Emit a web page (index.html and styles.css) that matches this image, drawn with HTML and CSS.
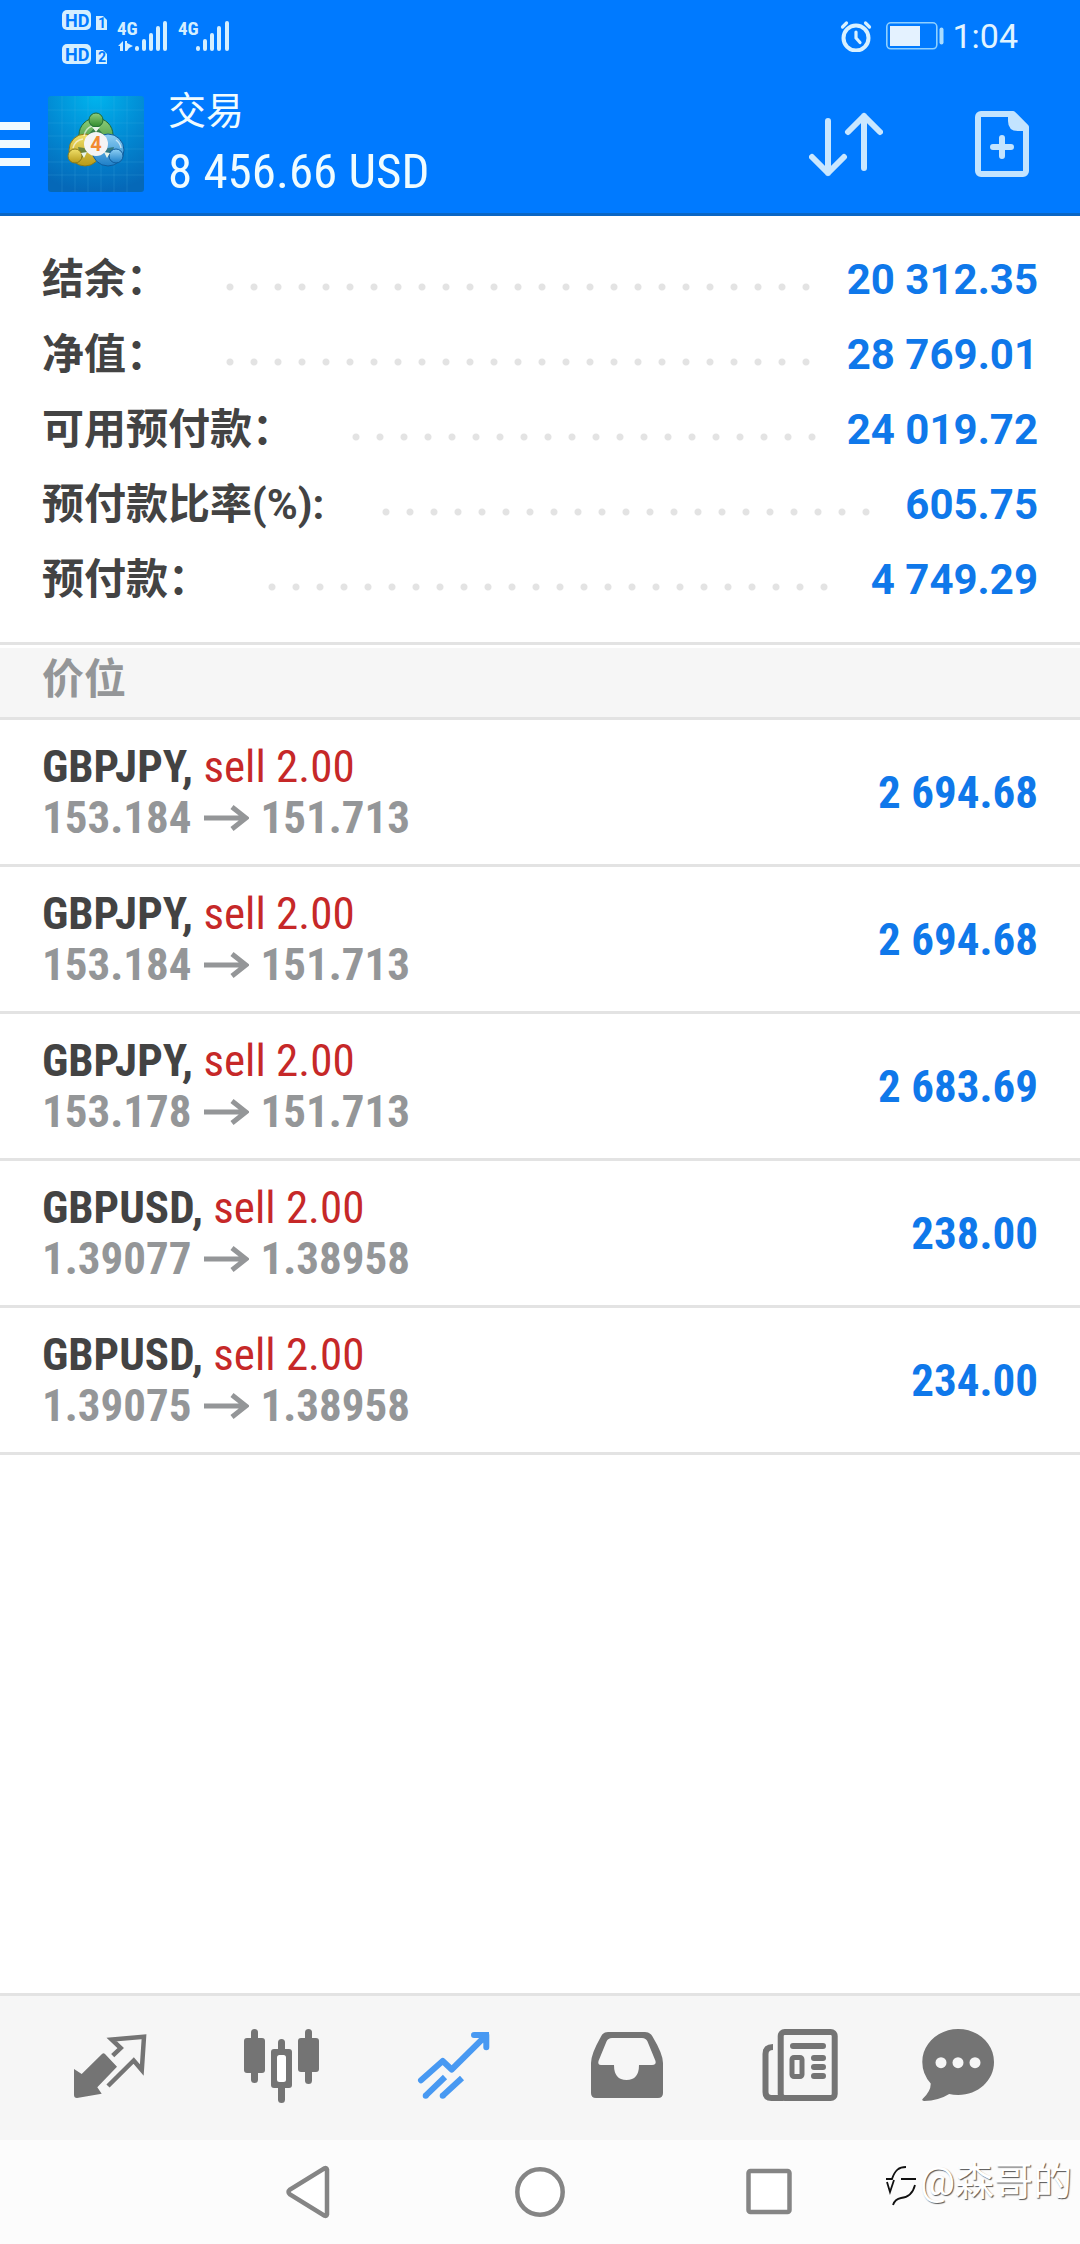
FILE: index.html
```html
<!DOCTYPE html>
<html lang="zh-CN">
<head>
<meta charset="utf-8">
<meta name="viewport" content="width=device-width, initial-scale=1">
<title>交易</title>
<link rel="stylesheet" href="styles.css">
</head>
<body>
<div class="app">
  <header class="top">
    <div class="status">
      <svg class="status-left" width="170" height="72" viewBox="0 0 170 72" aria-hidden="true">
        <g fill="#d4efff">
          <rect x="0" y="10" width="29" height="20" rx="5"/>
          <rect x="0" y="44" width="29" height="20" rx="5"/>
          <path d="M34 16h7l4 4v10h-11z"/>
          <path d="M34 50h7l4 4v10h-11z"/>
          <text class="net" x="55" y="35">4G</text>
          <text class="net" x="116" y="35">4G</text>
          <path d="M56 46l5-5v10h-3v-5zM63 41h2v2l6 3-4 2-2 3h-2z"/>
        </g>
        <g fill="#007aff">
          <text class="hd" x="3" y="27">HD</text>
          <text class="hd" x="3" y="61">HD</text>
          <text class="sim" x="36" y="28">1</text>
          <text class="sim" x="36" y="62">2</text>
        </g>
        <g stroke="#d4efff" stroke-width="4" stroke-linecap="round">
          <path d="M75 48v1M82 41v8M89 35v14M96 28v21M103 23v26"/>
          <path d="M136 48v1M143 41v8M150 35v14M157 28v21M165 23v26"/>
        </g>
      </svg>
      <div class="status-right">
        <svg width="32" height="32" viewBox="0 0 32 32" fill="none" stroke="#d9f1ff" stroke-width="4" stroke-linecap="round" aria-hidden="true">
          <circle cx="16" cy="18" r="12.5"/>
          <path d="M16 12v6l4 4.500M2.500 7l4-4M29.500 7l-4-4" stroke-width="3.200"/>
        </svg>
        <svg width="58" height="28" viewBox="0 0 58 28" aria-hidden="true">
          <rect x="0.800" y="0.800" width="50" height="26" rx="4" fill="none" stroke="#8fd0ff" stroke-width="1.600"/>
          <rect x="4" y="4" width="30" height="20" fill="#e4f2ff"/>
          <rect x="53.500" y="5.500" width="4" height="17" rx="2" fill="#a9dcff"/>
        </svg>
        <span class="clock">1:04</span>
      </div>
    </div>
    <div class="bar">
      <button class="icon-btn" type="button" aria-label="菜单">
        <svg width="30" height="44" viewBox="0 0 30 44"><path d="M0 0h30v8H0zM0 18h30v8H0zM0 36h30v8H0z" fill="#f0faff"/></svg>
      </button>
      <svg class="logo" width="96" height="96" viewBox="0 0 96 96" aria-hidden="true">
        <defs>
          <radialGradient id="bg" cx="50%" cy="0%" r="100%">
            <stop offset="0" stop-color="#00b4ee"/><stop offset="0.550" stop-color="#0288d2"/><stop offset="1" stop-color="#0568b8"/>
          </radialGradient>
          <linearGradient id="gr" x1="0" y1="0" x2="0" y2="1"><stop offset="0" stop-color="#8fce7c"/><stop offset="1" stop-color="#2f8a2c"/></linearGradient>
          <linearGradient id="ye" x1="0" y1="0" x2="0" y2="1"><stop offset="0" stop-color="#f0e06a"/><stop offset="1" stop-color="#b89a18"/></linearGradient>
          <linearGradient id="bl" x1="0" y1="0" x2="0" y2="1"><stop offset="0" stop-color="#8fd0f4"/><stop offset="1" stop-color="#1d7fc8"/></linearGradient>
        </defs>
        <rect width="96" height="96" rx="3" fill="url(#bg)"/>
        <path d="M14 0v96M27 0v96M40 0v96M53 0v96M66 0v96M79 0v96M0 14h96M0 27h96M0 40h96M0 53h96M0 66h96M0 79h96" stroke="#5cc4f0" stroke-opacity="0.180"/>
        <circle cx="48" cy="39" r="17" fill="url(#gr)" stroke="#1f6a38"/>
        <circle cx="37" cy="54" r="16" fill="url(#ye)" stroke="#8a7a18"/>
        <circle cx="60" cy="54" r="16" fill="url(#bl)" stroke="#0f5c9c"/>
        <path d="M36 40a13 13 0 0 1 8-10M25 52a12 12 0 0 1 10-9M68 44a12 12 0 0 1 5 8" fill="none" stroke="#ffffff" stroke-opacity="0.600" stroke-width="1.500"/>
        <path d="M39 40l9-10 9 10zM33 63l-3-12 12 2zM63 63l3-12-12 2z" fill="#12543a" fill-opacity="0.550"/>
        <circle cx="48" cy="24" r="7" fill="url(#gr)" stroke="#1f6a38"/>
        <circle cx="27" cy="60" r="7" fill="url(#ye)" stroke="#8a7a18"/>
        <circle cx="68" cy="60" r="7" fill="url(#bl)" stroke="#0f5c9c"/>
        <path d="M44 31l4 5 4-5zM33 57l6-1-3 6zM62 57l-6-1 3 6z" fill="#e8f4e8"/>
        <circle cx="48" cy="48" r="12" fill="#f4f4f4"/>
        <text class="logo-num" x="48" y="55" text-anchor="middle" fill="#f28a30">4</text>
      </svg>
      <div class="heading">
        <h1 class="title">交易</h1>
        <div class="total">8 456.66 USD</div>
      </div>
      <div class="actions">
        <button class="icon-btn" type="button" aria-label="排序">
          <svg width="74" height="66" viewBox="0 0 74 66" fill="none" stroke="#c9e7ff" stroke-width="6" stroke-linecap="round" stroke-linejoin="round">
            <path d="M19 10v52M3 46l16 16 16-16M55 57V5M39 21L55 5l16 16"/>
          </svg>
        </button>
        <button class="icon-btn" type="button" aria-label="新订单">
          <svg width="54" height="66" viewBox="0 0 54 66" fill="none" stroke="#c3e4ff" stroke-width="6" stroke-linejoin="round">
            <path d="M6 3h32l13 13v44a3 3 0 0 1-3 3H6a3 3 0 0 1-3-3V6a3 3 0 0 1 3-3z"/>
            <path d="M34 5v5q0 9 9 9h8L38 4z" fill="#c3e4ff" stroke-width="2"/>
            <path d="M27 27v18M18 36h18" stroke-linecap="round"/>
          </svg>
        </button>
      </div>
    </div>
  </header>

  <main class="content">
    <dl class="summary">
      <div class="sum-row"><dt>结余：</dt><dd>20 312.35</dd></div>
      <div class="sum-row"><dt>净值：</dt><dd>28 769.01</dd></div>
      <div class="sum-row"><dt>可用预付款：</dt><dd>24 019.72</dd></div>
      <div class="sum-row"><dt>预付款比率(%):</dt><dd>605.75</dd></div>
      <div class="sum-row"><dt>预付款：</dt><dd>4 749.29</dd></div>
    </dl>
    <h2 class="section">价位</h2>
    <ul class="trades">
      <li class="trade">
        <div class="info">
          <div class="pair">GBPJPY, <span class="side">sell 2.00</span></div>
          <div class="prices">153.184<svg class="arrow" viewBox="0 0 45 26"><path d="M0 13h42M28 2l14 11-14 11"/></svg>151.713</div>
        </div>
        <div class="profit">2 694.68</div>
      </li>
      <li class="trade">
        <div class="info">
          <div class="pair">GBPJPY, <span class="side">sell 2.00</span></div>
          <div class="prices">153.184<svg class="arrow" viewBox="0 0 45 26"><path d="M0 13h42M28 2l14 11-14 11"/></svg>151.713</div>
        </div>
        <div class="profit">2 694.68</div>
      </li>
      <li class="trade">
        <div class="info">
          <div class="pair">GBPJPY, <span class="side">sell 2.00</span></div>
          <div class="prices">153.178<svg class="arrow" viewBox="0 0 45 26"><path d="M0 13h42M28 2l14 11-14 11"/></svg>151.713</div>
        </div>
        <div class="profit">2 683.69</div>
      </li>
      <li class="trade">
        <div class="info">
          <div class="pair">GBPUSD, <span class="side">sell 2.00</span></div>
          <div class="prices">1.39077<svg class="arrow" viewBox="0 0 45 26"><path d="M0 13h42M28 2l14 11-14 11"/></svg>1.38958</div>
        </div>
        <div class="profit">238.00</div>
      </li>
      <li class="trade">
        <div class="info">
          <div class="pair">GBPUSD, <span class="side">sell 2.00</span></div>
          <div class="prices">1.39075<svg class="arrow" viewBox="0 0 45 26"><path d="M0 13h42M28 2l14 11-14 11"/></svg>1.38958</div>
        </div>
        <div class="profit">234.00</div>
      </li>
    </ul>
  </main>

  <nav class="tabs">
    <a class="tab" href="#quotes" aria-label="行情">
      <svg viewBox="0 0 90 90">
        <path d="M9 46l7.700 5L37 31q1.500-1.500 3 0l12 12.700L32.300 64.300l4.400 6.400L12 75q-3 0-3-3z" fill="#747474"/>
        <path d="M47.700 32.700l8-7.700-9-8.500L79 13.800l-2.200 33.200-8.100-9.500L43 63" fill="none" stroke="#747474" stroke-width="4.500"/>
      </svg>
    </a>
    <a class="tab" href="#chart" aria-label="图表">
      <svg viewBox="0 0 90 90" fill="#747474">
        <rect x="7" y="15" width="21" height="35" rx="3"/><rect x="14" y="6" width="7" height="54" rx="3.500"/>
        <rect x="61" y="15" width="21" height="34" rx="3"/><rect x="68" y="6" width="7" height="55" rx="3.500"/>
        <rect x="34" y="26" width="21" height="39" rx="3"/><rect x="41" y="16" width="7" height="64" rx="3.500"/>
        <rect x="40" y="32" width="9" height="27" rx="2.500" fill="#fff"/>
      </svg>
    </a>
    <a class="tab" href="#trade" aria-label="交易" aria-current="page">
      <svg viewBox="0 0 90 90" fill="none" stroke="#4899f2" stroke-width="6">
        <path d="M12 57.300L33.700 38l9 8.500L76 13.500" stroke-linecap="round" stroke-linejoin="round"/>
        <path d="M65 12h12.300v12.300" stroke-linecap="round" stroke-linejoin="round"/>
        <path d="M72 12h5v6z" fill="#4899f2"/>
        <path d="M36 54L16.700 72.700M53 55L33.700 72.700"/>
        <path d="M16.700 72.700h0M33.700 72.700h0" stroke-linecap="round"/>
      </svg>
    </a>
    <a class="tab" href="#history" aria-label="历史">
      <svg viewBox="0 0 90 90" fill="#747474" fill-rule="evenodd">
        <path d="M27 9h37q5 0 7.500 4.500Q82 31 82 40v30q0 5-5 5H15q-5 0-5-5V40q0-9 10-26.500Q22 9 27 9zM31 15q-4 0-5.500 3.500L17.500 38q-1 4 2.500 4h13q0 15 12.500 15T58 42h13q4.500 0 3.500-4l-8-19.500Q65 15 61 15z"/>
      </svg>
    </a>
    <a class="tab" href="#news" aria-label="新闻">
      <svg viewBox="0 0 90 90" fill="none" stroke="#747474" stroke-width="6">
        <rect x="27.700" y="9" width="54" height="66" rx="4"/>
        <path d="M20 24q-7.500 0-7.500 7v38q0 6 6 6h12"/>
        <path d="M40 23h30M61 35h9M61 44h9M61 53h9" stroke-linecap="round"/>
        <rect x="39" y="34.500" width="10" height="19" rx="2" stroke-width="5"/>
      </svg>
    </a>
    <a class="tab" href="#chat" aria-label="聊天">
      <svg viewBox="0 0 90 90" fill="#747474">
        <path d="M33.200 6c20 0 35.800 14.500 35.800 33S53 72 33.200 72q-5 0-9-1Q14 77.500-1 78q-3-.5-1-2.500Q6 68 5.700 60.500-2.700 51-2.700 39C-2.700 20.500 13.500 6 33.200 6z"/>
        <g fill="#f6f6f6"><circle cx="16" cy="39.700" r="5.500"/><circle cx="33" cy="39.700" r="5.500"/><circle cx="50" cy="39.700" r="5.500"/></g>
      </svg>
    </a>
  </nav>

  <div class="sysnav">
    <button class="icon-btn" type="button" aria-label="返回"><svg width="54" height="54" viewBox="-2 0 54 54"><path d="M42 4.500v45q-.3 2-2.500 1.200L5 29.500q-3-2.500 0-5L39.500 3.300q2.200-.8 2.500 1.200z"/></svg></button>
    <button class="icon-btn" type="button" aria-label="主页"><svg width="54" height="54" viewBox="0 0 54 54"><circle cx="27" cy="27" r="22.700"/></svg></button>
    <button class="icon-btn" type="button" aria-label="最近任务"><svg width="54" height="54" viewBox="0 0 54 54"><rect x="5.500" y="6" width="41" height="41" rx="2"/></svg></button>
    <div class="watermark">
      <svg width="36" height="44" viewBox="0 0 36 44" fill="none" aria-hidden="true">
        <path d="M2 17h6C11 8 15 5 22 5M17 17h15M3 20l3 10 4-12M31 23q-3 12-14 13-6 1-8 7" stroke="#111" stroke-width="1.800"/>
      </svg>
      <span>@森哥的</span>
    </div>
  </div>
</div>
</body>
</html>
```
FILE: styles.css
```css
* {
  box-sizing: border-box;
}

body {
  margin: 0;
  background: #fff;
  color: #434343;
  font-family: Roboto, "Noto Sans CJK SC", sans-serif;
}

h1, h2, dl, dd, ul {
  margin: 0;
  padding: 0;
}

.app {
  display: flex;
  flex-direction: column;
  min-height: 100vh;
}

.icon-btn {
  display: flex;
  padding: 0;
  border: 0;
  background: none;
}

/* Header */
.top {
  background: #007aff;
  border-bottom: 3px solid #0b66c4;
}

.status {
  display: flex;
  justify-content: space-between;
  align-items: center;
  height: 72px;
  padding: 0 62px;
}

.status-right {
  display: flex;
  align-items: center;
  gap: 14px;
}

.clock {
  margin-left: -6px;
  color: #e2f4ff;
  font-size: 34px;
  line-height: 40px;
}

.hd, .sim, .net {
  font-weight: 700;
  font-family: Roboto, sans-serif;
}

.hd {
  font-size: 18px;
}

.sim {
  font-size: 14px;
}

.net {
  font-family: "Roboto Condensed", "Liberation Sans Narrow", Roboto, sans-serif;
  font-size: 19px;
}

.bar {
  display: flex;
  align-items: center;
  height: 141px;
  padding: 3px 51px 0 0;
}

.logo {
  margin: 0 24px 0 18px;
}

.logo-num {
  font: 700 20px Roboto, sans-serif;
}

.heading {
  display: flex;
  flex: 1;
  flex-direction: column;
  gap: 6px;
  color: #f0fcff;
}

.title {
  font-size: 38px;
  font-weight: 400;
  line-height: 50px;
}

.total {
  font-family: "Roboto Condensed", "Liberation Sans Narrow", Roboto, sans-serif;
  font-size: 49px;
  line-height: 60px;
}

.actions {
  display: flex;
  gap: 92px;
}

/* Account summary */
.content {
  flex: 1;
}

.summary {
  padding: 26px 42px 25px;
  border-bottom: 3px solid #e3e3e3;
  font-size: 42px;
  font-weight: 700;
  line-height: 75px;
}

.sum-row {
  display: flex;
}

.sum-row::before {
  content: "";
  order: 1;
  flex: 1;
  margin: 0 30px 0 43px;
  background: radial-gradient(circle at 19px 45px, #e3e3e3 3px, transparent 4px) 0 0 / 24px 75px repeat-x;
}

.sum-row dd {
  order: 2;
  color: #0f78ea;
}

.section {
  margin-top: 3px;
  padding: 0 42px 6px;
  border-bottom: 3px solid #e3e3e3;
  background: #f6f6f6;
  color: #949698;
  font-size: 42px;
  font-weight: 700;
  line-height: 63px;
}

/* Open positions */
.trades {
  list-style: none;
  font-family: "Roboto Condensed", "Liberation Sans Narrow", Roboto, sans-serif;
  font-size: 45px;
  font-weight: 700;
  line-height: 51px;
}

.trade {
  display: flex;
  align-items: center;
  justify-content: space-between;
  padding: 21px 42px;
  border-bottom: 3px solid #e3e3e3;
}

.side {
  color: #c62828;
  font-weight: 400;
}

.prices {
  display: flex;
  align-items: center;
  color: #949698;
}

.arrow {
  width: 45px;
  height: 26px;
  margin: 0 12px;
  fill: none;
  stroke: #949698;
  stroke-width: 5;
}

.profit {
  color: #0f78ea;
}

/* Bottom tabs */
.tabs {
  display: grid;
  grid-template-columns: repeat(6, 1fr);
  padding: 27px 24px;
  border-top: 3px solid #e3e3e3;
  background: #f6f6f6;
}

.tab {
  display: flex;
  justify-content: center;
}

.tab svg {
  width: 90px;
  height: 90px;
  overflow: visible;
}

/* System navigation */
.sysnav {
  position: relative;
  display: flex;
  align-items: center;
  justify-content: center;
  gap: 176px;
  height: 104px;
  background: #fcfcfc;
}

.sysnav .icon-btn svg {
  fill: #fff;
  stroke: #858585;
  stroke-width: 4.5;
}

.watermark {
  position: absolute;
  right: 8px;
  bottom: 36px;
  display: flex;
  align-items: center;
  color: #fff;
  font-size: 39px;
  line-height: 44px;
  text-shadow: 1px 1px 1px #555;
}

.watermark span {
  padding-bottom: 4px;
}
```
